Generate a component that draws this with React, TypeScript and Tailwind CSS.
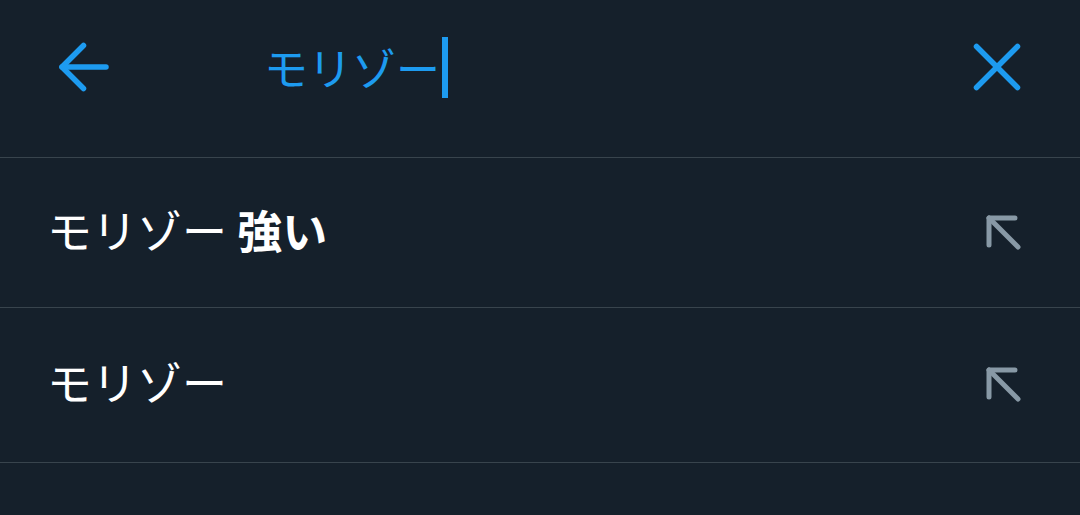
import React from 'react';

const font = { fontFamily: '"Noto Sans CJK JP", "Noto Sans", sans-serif' };

function BackArrow() {
  return (
    <svg width="50" height="50" viewBox="0 0 50 50" fill="none" stroke="#1d9bf0" strokeWidth="5.5" strokeLinecap="round" strokeLinejoin="round">
      <path d="M3 25 H47" />
      <path d="M24.5 3.5 L3 25 L24.5 46.5" />
    </svg>
  );
}

function CloseIcon() {
  return (
    <svg width="48" height="48" viewBox="0 0 48 48" fill="none" stroke="#1d9bf0" strokeWidth="5.5" strokeLinecap="round">
      <path d="M3.5 3.5 L44.5 44.5" />
      <path d="M44.5 3.5 L3.5 44.5" />
    </svg>
  );
}

function UpLeftArrow() {
  return (
    <svg width="36" height="36" viewBox="0 0 36 36" fill="none" stroke="#8899a6" strokeWidth="5" strokeLinecap="round" strokeLinejoin="round">
      <path d="M3 30 V3 H29" />
      <path d="M3 3 L32 32" />
    </svg>
  );
}

function Suggestion({ base, extra, height }: { base: string; extra?: string; height: string }) {
  return (
    <div className={`flex items-center justify-between border-b border-[#38444d] pl-[47px] pr-[58px] ${height}`}>
      <div className="pb-[7px] text-[45px] leading-none text-white" style={font}>
        <span className="font-normal">{base}</span>
        {extra && <span className="font-bold"> {extra}</span>}
      </div>
      <UpLeftArrow />
    </div>
  );
}

export default function App() {
  return (
    <div className="h-[515px] w-[1080px] overflow-hidden bg-[#15202b]">
      <header className="flex h-[158px] items-start border-b border-[#38444d]">
        <div className="flex h-[134px] w-full items-center pl-[59px] pr-[59px]">
          <BackArrow />
          <div className="ml-[155px] flex items-center">
            <span className="text-[44px] leading-none font-normal text-[#1d9bf0]" style={font}>モリゾー</span>
            <div className="ml-[2px] h-[61px] w-[6px] shrink-0 bg-[#1d9bf0]" />
          </div>
          <div className="ml-auto">
            <CloseIcon />
          </div>
        </div>
      </header>
      <Suggestion base="モリゾー" extra="強い" height="h-[150px]" />
      <Suggestion base="モリゾー" height="h-[155px]" />
    </div>
  );
}
